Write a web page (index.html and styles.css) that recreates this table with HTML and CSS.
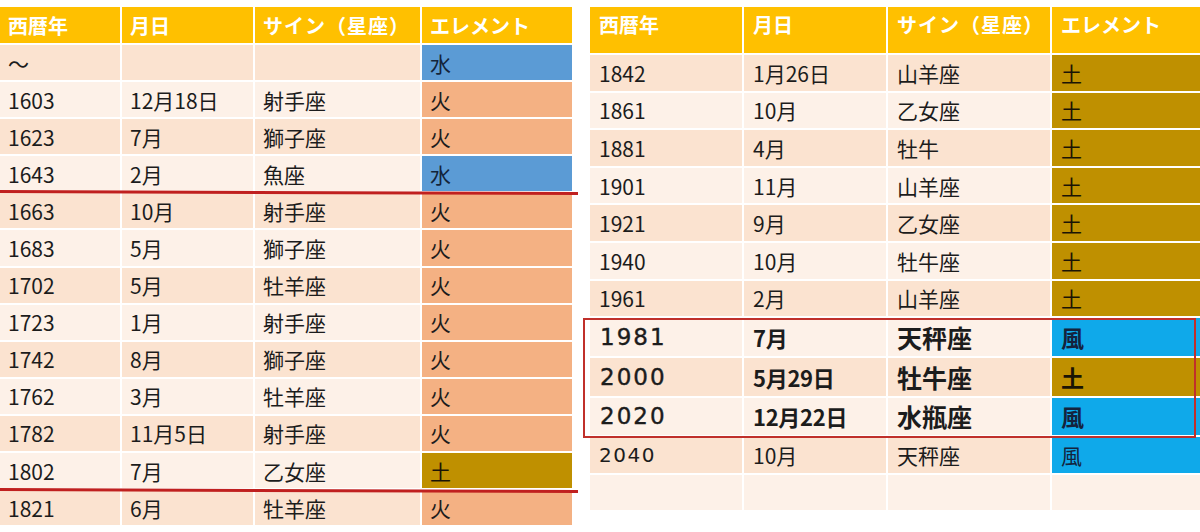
FILE: index.html
```html
<!DOCTYPE html>
<html lang="ja">
<head>
<meta charset="utf-8">
<link rel="stylesheet" href="styles.css">
</head>
<body>
<div class="page">
  <div class="tbl left">
    <div class="row head"><div class="c">西暦年</div><div class="c">月日</div><div class="c">サイン（星座）</div><div class="c">エレメント</div></div>
    <div class="row a"><div class="c">～</div><div class="c"></div><div class="c"></div><div class="c water">水</div></div>
    <div class="row b"><div class="c">1603</div><div class="c">12月18日</div><div class="c">射手座</div><div class="c fire">火</div></div>
    <div class="row a"><div class="c">1623</div><div class="c">7月</div><div class="c">獅子座</div><div class="c fire">火</div></div>
    <div class="row b"><div class="c">1643</div><div class="c">2月</div><div class="c">魚座</div><div class="c water">水</div></div>
    <div class="row a"><div class="c">1663</div><div class="c">10月</div><div class="c">射手座</div><div class="c fire">火</div></div>
    <div class="row b"><div class="c">1683</div><div class="c">5月</div><div class="c">獅子座</div><div class="c fire">火</div></div>
    <div class="row a"><div class="c">1702</div><div class="c">5月</div><div class="c">牡羊座</div><div class="c fire">火</div></div>
    <div class="row b"><div class="c">1723</div><div class="c">1月</div><div class="c">射手座</div><div class="c fire">火</div></div>
    <div class="row a"><div class="c">1742</div><div class="c">8月</div><div class="c">獅子座</div><div class="c fire">火</div></div>
    <div class="row b"><div class="c">1762</div><div class="c">3月</div><div class="c">牡羊座</div><div class="c fire">火</div></div>
    <div class="row a"><div class="c">1782</div><div class="c">11月5日</div><div class="c">射手座</div><div class="c fire">火</div></div>
    <div class="row b"><div class="c">1802</div><div class="c">7月</div><div class="c">乙女座</div><div class="c earth">土</div></div>
    <div class="row a"><div class="c">1821</div><div class="c">6月</div><div class="c">牡羊座</div><div class="c fire">火</div></div>
    <div class="redline line1"></div>
    <div class="redline line2"></div>
  </div>
  <div class="tbl right">
    <div class="row head"><div class="c">西暦年</div><div class="c">月日</div><div class="c">サイン（星座）</div><div class="c">エレメント</div></div>
    <div class="row a"><div class="c">1842</div><div class="c">1月26日</div><div class="c">山羊座</div><div class="c earth">土</div></div>
    <div class="row b"><div class="c">1861</div><div class="c">10月</div><div class="c">乙女座</div><div class="c earth">土</div></div>
    <div class="row a"><div class="c">1881</div><div class="c">4月</div><div class="c">牡牛</div><div class="c earth">土</div></div>
    <div class="row b"><div class="c">1901</div><div class="c">11月</div><div class="c">山羊座</div><div class="c earth">土</div></div>
    <div class="row a"><div class="c">1921</div><div class="c">9月</div><div class="c">乙女座</div><div class="c earth">土</div></div>
    <div class="row b"><div class="c">1940</div><div class="c">10月</div><div class="c">牡牛座</div><div class="c earth">土</div></div>
    <div class="row a"><div class="c">1961</div><div class="c">2月</div><div class="c">山羊座</div><div class="c earth">土</div></div>
    <div class="row b big"><div class="c yr">1981</div><div class="c">7月</div><div class="c">天秤座</div><div class="c air">風</div></div>
    <div class="row a big"><div class="c yr">2000</div><div class="c">5月29日</div><div class="c">牡牛座</div><div class="c earth">土</div></div>
    <div class="row b big"><div class="c yr">2020</div><div class="c">12月22日</div><div class="c">水瓶座</div><div class="c air">風</div></div>
    <div class="row a future"><div class="c yr">2040</div><div class="c">10月</div><div class="c">天秤座</div><div class="c air">風</div></div>
    <div class="row b blank"><div class="c"></div><div class="c"></div><div class="c"></div><div class="c"></div></div>
    <div class="redbox"></div>
  </div>
</div>
</body>
</html>
```

FILE: styles.css
```css
html, body {
  margin: 0;
  padding: 0;
  background: #ffffff;
}
body {
  font-family: "Noto Sans CJK JP", "Noto Sans", sans-serif;
  color: #1c1c1c;
}
.page {
  display: flex;
  gap: 18px;
  padding-top: 7px;
  width: 1200px;
  height: 532px;
  overflow: hidden;
}
.tbl {
  position: relative;
  display: flex;
  flex-direction: column;
  gap: 2px;
}
.left { width: 572px; }
.right { width: 610px; }
.row {
  display: grid;
  column-gap: 2px;
  height: 35.1px;
}
.left .row { grid-template-columns: 120px 131px 165px 150px; }
.right .row { grid-template-columns: 152px 142px 162px 148px; height: 35.6px; }
.c {
  display: flex;
  align-items: center;
  padding-left: 8px;
  font-size: 21px;
  white-space: nowrap;
  overflow: hidden;
}
.right .c { padding-left: 9px; }
.row.head { height: 36px; }
.row.head .c {
  background: #ffc000;
  color: #ffffff;
  font-weight: bold;
  font-size: 20px;
}
.row.head .c:nth-child(3) { letter-spacing: 1px; }
.right .row.head { height: 46px; }
.right .row.head .c { align-items: flex-start; padding-top: 3px; }
.row.a .c { background: #fbe3d0; }
.row.b .c { background: #fdf1e8; }
.row .c.fire { background: #f4b183; }
.row .c.water { background: #5b9bd5; color: #13243a; }
.row .c.earth { background: #bf9000; color: #1a1405; }
.row .c.air { background: #0fa9ea; color: #14233d; }

.right .row.big { height: 37.7px; }
.right .row.big .c { font-weight: bold; font-size: 23px; }
.right .row.big .c:nth-child(2) { font-size: 22px; letter-spacing: -0.3px; }
.right .row.big .c:nth-child(3) { font-size: 25px; }
.right .row.big .c.yr {
  font-family: "DejaVu Sans", sans-serif;
  font-weight: normal;
  font-size: 23px;
  letter-spacing: 2px;
  padding-left: 10px;
  -webkit-text-stroke: 0.4px #1c1c1c;
}
.right .row.future { height: 36px; }
.right .row.future .c.yr {
  font-family: "DejaVu Sans", sans-serif;
  font-size: 20px;
  letter-spacing: 1.5px;
}
.right .row.blank { height: 35px; }

.redline {
  position: absolute;
  left: 0;
  width: 578px;
  height: 3px;
  background: #c0201f;
  transform-origin: left center;
  transform: rotate(0.2deg);
}
.line1 { top: 183px; }
.line2 { top: 481px; }
.redbox {
  position: absolute;
  left: -7px;
  top: 311px;
  width: 609px;
  height: 116px;
  border: 2px solid #c0302b;
}
```
